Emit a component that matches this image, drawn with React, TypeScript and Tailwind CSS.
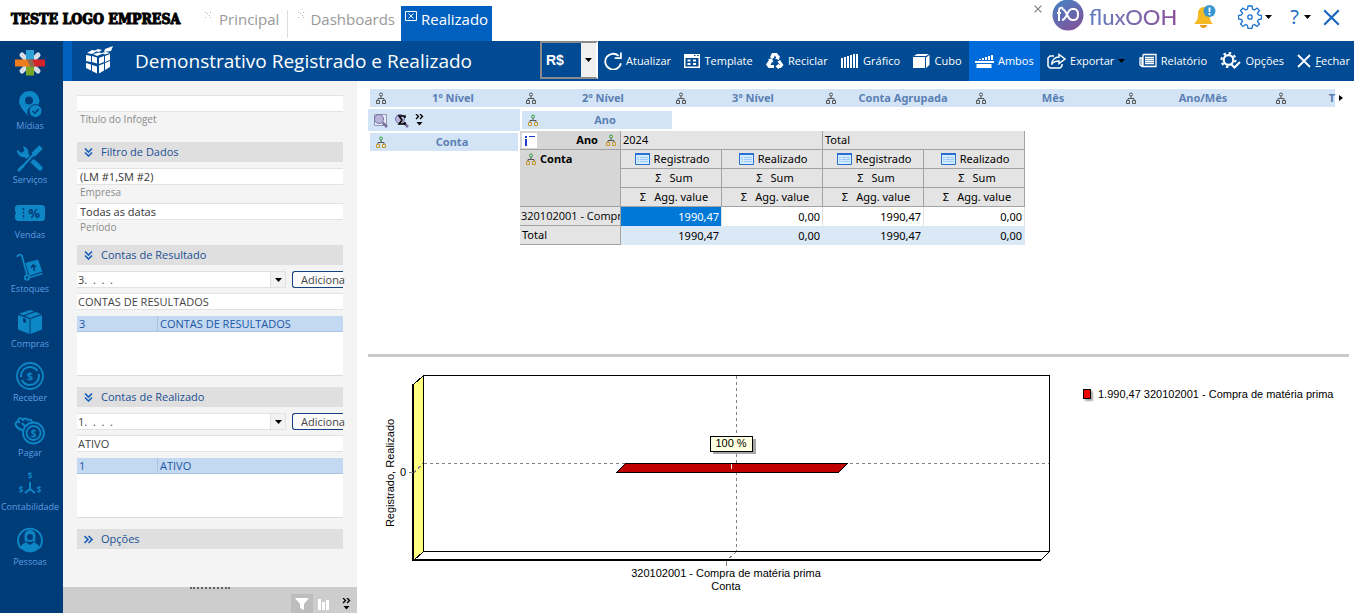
import React from "react";

type IconProps = { className?: string };

/* ---------- Sidebar icons ---------- */

const MidiasIcon = () => (
  <svg className="w-7 h-7" viewBox="0 0 28 28" fill="none">
    <path fill="currentColor" fillRule="evenodd" d="M13 1a10 10 0 0 0-10 10c0 5 4 9 9 15a6.800 6.800 0 0 1 3-9.500a6.800 6.800 0 0 1 7-.5A10 10 0 0 0 13 1Zm0 5.500a4 4 0 1 1 0 8a4 4 0 0 1 0-8Z" />
    <circle cx="19.500" cy="21" r="6.500" fill="currentColor" stroke="#003c78" />
    <path stroke="#003c78" strokeWidth="1.500" d="m16.500 21 2.300 2.200 4-4.200" />
  </svg>
);

const ServicosIcon = () => (
  <svg className="w-7 h-7" viewBox="0 0 28 28" fill="none" stroke="currentColor">
    <path strokeWidth="5" strokeLinecap="round" d="m10 11 14 13" />
    <path fill="currentColor" stroke="none" d="M1 5.500 5.500 9l3-2.500L7 2a7 7 0 0 1 5 9.500L9.500 13A7 7 0 0 1 1 5.500Z" />
    <path stroke="#003c78" strokeWidth="5" d="M7 22 20 9" />
    <path strokeWidth="2" d="M5 24 20 8" />
    <path strokeWidth="5" d="m17 11 8-8" />
    <path strokeWidth="3" strokeLinecap="round" d="m3 26 4-4" />
  </svg>
);

const VendasIcon = () => (
  <svg className="w-8 h-7" viewBox="0 0 32 28">
    <path fill="currentColor" d="M3 6h26l2 2v12l-2 2H3l-2-2v-4l1-2-1-2V8Z" />
    <path stroke="#003c78" strokeWidth="1.500" strokeDasharray="2 1.500" d="M9.500 9v11" />
    <text x="20" y="18.500" fontSize="13" fontWeight="700" fill="#003c78" textAnchor="middle">%</text>
  </svg>
);

const EstoquesIcon = () => (
  <svg className="w-7 h-7" viewBox="0 0 28 28" fill="none" stroke="currentColor" strokeWidth="1.800">
    <path d="M1 4c1-3 4-3 5-1l5 19" />
    <circle cx="11" cy="24.500" r="2.200" />
    <path d="m13.500 24.500 13-4" />
    <path fill="currentColor" d="m10.500 10.500 11-3 3.500 10.500-11 3.500Z" />
    <path stroke="#003c78" strokeWidth="1.500" d="m18.500 18-1.300-6m-2.200 3 2.200-3.200 2.800 2" />
  </svg>
);

const ComprasIcon = () => (
  <svg className="w-7 h-7" viewBox="0 0 28 28" fill="currentColor">
    <path d="m2 7 11.500 4v15L2 21.500ZM14.500 11 26 7v14.500L14.500 26ZM3 5.800 14 2l4 1.300L7.500 7.300ZM9 7.900l10.500-4 5.500 2-11 4Z" />
    <path fill="#003c78" d="m7 10 3 1v4l-3-1Z" />
  </svg>
);

const ReceberIcon = () => (
  <svg className="w-7 h-7" viewBox="0 0 28 28" fill="none" stroke="currentColor" strokeWidth="1.800">
    <circle cx="14" cy="14" r="13" />
    <circle cx="14" cy="14" r="9" strokeWidth="2" strokeDasharray="24 3" />
    <text x="14" y="18" fontSize="11" fontWeight="700" fill="currentColor" stroke="none" textAnchor="middle">$</text>
  </svg>
);

const PagarIcon = () => (
  <svg className="w-8 h-7" viewBox="0 0 32 28" fill="none" stroke="currentColor" strokeWidth="1.800">
    <path d="M9 14 3 10C0 7 2 4 5 5L4 3c1-3 4-2 5 0 1-2 4-2 5 0 2-1 4 0 4 2" />
    <path d="M3 9c0 3 3 4 5 3M8 6c2 4 5 3 6 1" />
    <circle cx="19.500" cy="16" r="10.500" />
    <circle cx="19.500" cy="16" r="7" />
    <text x="19.500" y="19.500" fontSize="10" fontWeight="700" fill="currentColor" stroke="none" textAnchor="middle">$</text>
  </svg>
);

const ContabilidadeIcon = () => (
  <svg className="w-7 h-7" viewBox="0 0 28 28" fill="currentColor">
    <path stroke="currentColor" strokeWidth="2" fill="none" d="M14 11v7l-5 4m5-4 5 4" />
    <text x="14" y="8" fontSize="8" fontWeight="700" textAnchor="middle">$</text>
    <text x="5" y="22" fontSize="8" fontWeight="700" textAnchor="middle">$</text>
    <text x="23" y="22" fontSize="8" fontWeight="700" textAnchor="middle">$</text>
  </svg>
);

const PessoasIcon = () => (
  <svg className="w-7 h-7" viewBox="0 0 28 28" fill="none" stroke="currentColor" strokeWidth="1.800">
    <path d="M5 22.500a12 12 0 1 1 18 0" />
    <path fill="currentColor" stroke="none" d="M4.500 22c1-4 3.500-5 6-5.500l3.500 2.500 3.500-2.500c2.500.5 5 1.500 6 5.500a12.500 12.500 0 0 1-19 0Z" />
    <path d="M10 16c-2-10 1.500-11 4-11s6 1 4 11" />
    <circle cx="14" cy="11" r="4" />
  </svg>
);

const sideItems = [
  { label: "Mídias", Icon: MidiasIcon },
  { label: "Serviços", Icon: ServicosIcon },
  { label: "Vendas", Icon: VendasIcon },
  { label: "Estoques", Icon: EstoquesIcon },
  { label: "Compras", Icon: ComprasIcon },
  { label: "Receber", Icon: ReceberIcon },
  { label: "Pagar", Icon: PagarIcon },
  { label: "Contabilidade", Icon: ContabilidadeIcon },
  { label: "Pessoas", Icon: PessoasIcon },
];

/* ---------- Toolbar icons ---------- */

const RefreshIcon = () => (
  <svg className="w-[18px] h-[18px]" viewBox="0 0 16 16" fill="none" stroke="currentColor" strokeWidth="1.600">
    <path d="M13 3.500A7 7 0 1 0 15 10M15 .5v5H9.500" />
  </svg>
);

const TemplateIcon = () => (
  <svg className="w-4 h-4" viewBox="0 0 16 16" fill="currentColor">
    <path fillRule="evenodd" d="M0 1h16v14H0Zm1.500 4v8.500h13V5ZM10 2v1h1.500V2Zm3 0v1h1.500V2Z" />
    <path d="M3.500 6.500h3v2h-3ZM9 6.500h3v2H9ZM3.500 10h3v2h-3ZM9 10h3v2H9Z" />
  </svg>
);

const RecycleIcon = () => (
  <svg className="w-[18px] h-4" viewBox="0 0 18 16" fill="currentColor">
    <path d="M6 0h5l2 3 1-.5-1 4.500-4-1.500 1.200-.8L9 2.500 7 6 4 4.300ZM2 6l4-.5L7.500 9.500l-1.300-.7L4.500 12H8v3H2.500L0 11.500 3 7ZM14 7l3.500 5-2.500 3h-2v1.500L9.500 13.500 13 10.500V12h1L11.500 8.500Z" />
  </svg>
);

const BarsIcon = () => (
  <svg className="w-[18px] h-4" viewBox="0 0 18 16" fill="currentColor">
    <path d="M0 5h2v10H0ZM3 4h2v11H3ZM6 3h2v12H6ZM9 2h2v13H9ZM12 1h2v14h-2ZM15 1h2v14h-2Z" />
  </svg>
);

const CuboIcon = () => (
  <svg className="w-[17px] h-4" viewBox="0 0 17 16" fill="currentColor">
    <path d="M0 4h12v11H0ZM1 3l3-2h12l-3 2ZM13 4.500 16.500 2v10L13 15Z" />
  </svg>
);

const AmbosIcon = () => (
  <svg className="w-[19px] h-4" viewBox="0 0 19 16" fill="currentColor">
    <path d="M0 8h19v2H0ZM1.500 11h15v4h-15ZM4 6h2v1H4ZM7 5h2v2H7ZM10 4h2v3h-2ZM13 3h2v4h-2ZM16 2h2v5h-2Z" />
  </svg>
);

const ExportIcon = () => (
  <svg className="w-[19px] h-4" viewBox="0 0 19 16" fill="none" stroke="currentColor" strokeWidth="1.500">
    <path d="M7 3H3L1 5v8l2 2h10l2-2v-2" />
    <path d="M12 1.500 18 6l-6 4.500V8C8 8 6 9 4.500 11.500 5 7 8 4 12 4Z" />
  </svg>
);

const ReportIcon = () => (
  <svg className="w-[18px] h-4" viewBox="0 0 18 16" fill="none" stroke="currentColor" strokeWidth="1.300">
    <path d="M4 1.500h13v12H3L1 12V5h2v8M4 1.500V13" />
    <path d="M6 4.500h9M6 6.500h9M6 8.500h9M6 10.500h9" />
  </svg>
);

const OptionsIcon = () => (
  <svg className="w-[21px] h-[18px]" viewBox="0 0 21 18" fill="none" stroke="currentColor">
    <circle cx="8.500" cy="8" r="4.800" strokeWidth="2.200" />
    <circle cx="8.500" cy="8" r="7" strokeWidth="2.200" strokeDasharray="2.500 3" />
    <path stroke="#004b93" strokeWidth="5" d="m12 13 2.500 2.500L20 9.500" />
    <path strokeWidth="2" d="m11.500 12.500 3 3L20 10" />
  </svg>
);

const CloseIcon = ({ className = "w-[14px] h-[14px]" }: IconProps) => (
  <svg className={className} viewBox="0 0 14 14" stroke="currentColor" strokeWidth="1.800">
    <path d="m1 1 12 12M13 1 1 13" />
  </svg>
);

const Caret = () => (
  <svg className="w-[7px] h-1" viewBox="0 0 7 4" fill="#000">
    <path d="M0 0h7L3.500 4Z" />
  </svg>
);

const toolbarItems = [
  { label: "Atualizar", Icon: RefreshIcon },
  { label: "Template", Icon: TemplateIcon },
  { label: "Reciclar", Icon: RecycleIcon },
  { label: "Gráfico", Icon: BarsIcon },
  { label: "Cubo", Icon: CuboIcon },
  { label: "Ambos", Icon: AmbosIcon, active: true },
  { label: "Exportar", Icon: ExportIcon, menu: true },
  { label: "Relatório", Icon: ReportIcon },
  { label: "Opções", Icon: OptionsIcon },
];

/* ---------- Small shared pieces ---------- */

const CubeLogo = () => (
  <svg className="w-[27px] h-[31px]" viewBox="0 0 27 31" fill="#fff">
    <path d="m1 7 5-3 5 1-5 3ZM8 5l4-2 4 1-3 2ZM19 3l8-3-2 5-7 1ZM7 8l6-1.500 4 1L11 10ZM15 7l5-1 4 1-5 1.500ZM0 9l5 1v6l-5-1ZM6 10l5 1.500v6L6 16ZM0 17l5 1.500v6L0 22ZM6 19l5 1.500v7L6 25ZM13 12l5-2v6l-5 2ZM19 10l5-2v6l-5 2ZM13 19.500l5-2v7l-5 3ZM19 17l5-2v6l-5 3Z" />
  </svg>
);

const StarLogo = () => (
  <svg className="w-[30px] h-[28px]" viewBox="0 0 30 28">
    <g stroke="#d5dde6" strokeWidth="5" strokeLinecap="round">
      <path d="m7 6 16 16M23 6 7 22" />
    </g>
    <path fill="#2f9fd8" d="M11 1h8v12h-8Z" />
    <path fill="#79a528" d="M11 14h8v12.500h-8Z" />
    <path fill="#ee7d1d" d="M0 10.500h15v7H0Z" />
    <path fill="#d4232b" d="M15 10.500h15v7H15Z" />
    <path fill="#8a6a50" d="M12 10.500h5l3 7h-5Z" />
  </svg>
);

const Tree = ({ colored }: { colored?: boolean }) => (
  <svg className="w-[10px] h-3 shrink-0" viewBox="0 0 10 12" fill="none" stroke="#555">
    <path d="M5 4v3M2 8V6.500h6V8" />
    <circle cx="5" cy="2.500" r="1.500" stroke={colored ? "#2f9a3c" : "#555"} />
    <path d="M.5 8.500h3v3h-3ZM6.500 8.500h3v3h-3Z" stroke={colored ? "#c79a2b" : "#555"} />
  </svg>
);

const GridIcon = () => (
  <svg className="w-[15px] h-3 shrink-0" viewBox="0 0 15 12">
    <path fill="#d4ecff" stroke="#2b6fd0" d="M.5.5h14v11H.5Z" />
    <path fill="#2b6fd0" d="M0 0h15v2H0Z" />
    <path stroke="#9ccaf2" d="M2 4.500h2M5 4.500h8M2 6.500h2M5 6.500h8M2 8.500h2M5 8.500h8" />
  </svg>
);

const DoubleArrow = ({ right }: { right?: boolean }) => (
  <svg className="w-[9px] h-[9px]" viewBox="0 0 9 9" fill="none" stroke="#1560bd" strokeWidth="1.600">
    <path d={right ? "M.5 1 4 4.500.5 8M4.500 1 8 4.500 4.500 8" : "M1 .5 4.500 4 8 .5M1 4.500 4.500 8 8 4.500"} />
  </svg>
);

const MoreIcon = () => (
  <svg className="w-[9px] h-3" viewBox="0 0 9 12" fill="none" stroke="#000" strokeWidth="1.400">
    <path d="m1 0 2.500 2.500L1 5M5 0l2.500 2.500L5 5" />
    <path fill="#000" stroke="none" d="M1.500 8h6l-3 3.500Z" />
  </svg>
);

const Magnifier = ({ sigma }: { sigma?: boolean }) => (
  <svg className="w-[15px] h-[15px]" viewBox="0 0 15 15" fill="none">
    {!sigma && <path fill="#e8ecf8" stroke="#8c97b8" d="M1.500 1.500h12v11h-12Z" />}
    <circle cx="6" cy="6" r="4.500" fill="#b9b4da" stroke="#7771a5" />
    <path stroke="#7a70a0" strokeWidth="2.500" d="m9.500 9.500 4.500 4.500" />
    {sigma && <path stroke="#000" strokeWidth="1.500" d="M11 5V3H5l3 4-3 4h6V9" />}
  </svg>
);

function SectionHeader({ children, closed }: { children: React.ReactNode; closed?: boolean }) {
  return (
    <button className="flex w-full h-5 items-center gap-2 bg-[#dfdfdf] pl-[7px] text-[11px] font-medium text-[#1b4f94]">
      <DoubleArrow right={closed} />
      {children}
    </button>
  );
}

function Field({ id, label, value }: { id: string; label: string; value: string }) {
  return (
    <div>
      <input
        id={id}
        defaultValue={value}
        className="block w-full h-[17px] border-y border-[#e2e2e2] bg-white px-[3px] text-[11px] leading-4 text-[#333]"
      />
      <label htmlFor={id} className="block pl-[3px] text-[10px] leading-[14px] text-[#8a8a8a]">
        {label}
      </label>
    </div>
  );
}

function AccountPicker({ code, name, row }: { code: string; name: string; row: string }) {
  return (
    <div className="mt-1.5 text-[11px] text-[#444]">
      <div className="flex h-[17px] items-center gap-1.5">
        <div className="relative flex-1">
          <select aria-label={name} className="block w-full h-[17px] appearance-none border-y border-[#e2e2e2] bg-white pl-px text-[11px] leading-[15px]">
            <option>{`${code}.\u00a0 .\u00a0 .\u00a0 .`}</option>
          </select>
          <span className="pointer-events-none absolute right-0 inset-y-0 flex w-4 items-center justify-center border border-[#e2e2e2] bg-[#f2f2f2]">
            <Caret />
          </span>
        </div>
        <button className="h-[17px] w-[51px] rounded-l-[3px] border border-r-0 border-[#16407f] bg-[#fbfbfb] pl-2 text-left text-[11px] leading-[15px]">
          Adiciona
        </button>
      </div>
      <input
        aria-label="Descrição da conta"
        defaultValue={name}
        className="mt-[5px] block w-full h-[17px] border-y border-[#e2e2e2] bg-white px-px text-[11px] leading-[15px]"
      />
      <div className="mt-1.5 h-[60px] border-b border-[#dcdcdc] bg-white">
        <table className="w-full table-fixed border-separate border-spacing-0 text-[#1b57a5]">
          <tbody>
            <tr className="h-4 bg-[#c3d9f1] leading-[15px]">
              <td className="w-[81px] border-r border-b border-[#a9c4e2] pl-0.5">{row}</td>
              <td className="border-b border-[#a9c4e2] pl-0.5">{name}</td>
            </tr>
          </tbody>
        </table>
      </div>
    </div>
  );
}

function Dimension({ label, colored }: { label: string; colored?: boolean }) {
  return (
    <button className="flex w-full h-[18px] items-center bg-[#d2e4f6] pl-1.5 text-[11px] font-bold text-[#5b80b2]">
      <Tree colored={colored} />
      <span className="flex-1 text-center">{label}</span>
    </button>
  );
}

/* ---------- Pivot grid ---------- */

const head = "h-[19px] border-r border-b border-[#a3a3a3] bg-[#e4e4e4] p-0 font-normal";
const measures = ["Registrado", "Realizado", "Registrado", "Realizado"];

function PivotTable() {
  return (
    <table className="w-[505px] table-fixed border-separate border-spacing-0 text-[11px] leading-[18px] text-black">
      <thead>
        <tr>
          <th className="h-[19px] w-[101px] border-r border-b border-[#a3a3a3] bg-[#d6d6d6] p-0 font-bold">
            <div className="flex items-center gap-2 pr-1 pl-0.5">
              <svg className="w-[15px] h-[15px]" viewBox="0 0 15 15">
                <path fill="#fff" d="M0 0h15v15H0Z" />
                <path stroke="#2438d0" strokeWidth="2" d="M3 4h2M4 6v7" />
                <path stroke="#2438d0" d="M7 3.500h6" />
              </svg>
              <span className="flex-1 text-right">Ano</span>
              <Tree colored />
            </div>
          </th>
          <th colSpan={2} className={`${head} text-left`}>
            <span className="pl-0.5">2024</span>
          </th>
          <th colSpan={2} className={`${head} text-left`}>
            <span className="pl-0.5">Total</span>
          </th>
        </tr>
        <tr>
          <th rowSpan={3} className="border-r border-b border-[#a3a3a3] bg-[#d6d6d6] p-0 align-top font-bold">
            <div className="flex items-center gap-1 pl-1.5">
              <Tree colored />
              Conta
            </div>
          </th>
          {measures.map((measure, i) => (
            <th key={i} className={head}>
              <div className="flex items-center justify-center gap-1 pl-0.5">
                <GridIcon />
                {measure}
              </div>
            </th>
          ))}
        </tr>
        <tr>
          {measures.map((_, i) => (
            <th key={i} className={head}>
              <div className="flex justify-center gap-2 pl-1.5">
                <span>Σ</span>Sum
              </div>
            </th>
          ))}
        </tr>
        <tr>
          {measures.map((_, i) => (
            <th key={i} className={head}>
              <div className="flex justify-center gap-2 pl-1.5">
                <span>Σ</span>Agg. value
              </div>
            </th>
          ))}
        </tr>
      </thead>
      <tbody className="text-right">
        <tr>
          <th className={`${head} overflow-hidden font-['Open_Sans',sans-serif] text-left whitespace-nowrap`}>
            <span className="pl-px">320102001 - Compr</span>
          </th>
          <td className="border-r border-[#e0e0e0] bg-[#0078d7] p-0 pr-0.5 text-white">1990,47</td>
          <td className="border-r border-[#e0e0e0] bg-white p-0 pr-0.5">0,00</td>
          <td className="border-r border-[#e0e0e0] bg-white p-0 pr-0.5">1990,47</td>
          <td className="border-r border-[#e0e0e0] bg-white p-0 pr-0.5">0,00</td>
        </tr>
        <tr className="bg-[#dbe8f6]">
          <th className={`${head} text-left`}>
            <span className="pl-0.5">Total</span>
          </th>
          <td className="p-0 pr-[3px]">1990,47</td>
          <td className="p-0 pr-[3px]">0,00</td>
          <td className="p-0 pr-[3px]">1990,47</td>
          <td className="p-0 pr-[3px]">0,00</td>
        </tr>
      </tbody>
    </table>
  );
}

/* ---------- Chart ---------- */

function Chart() {
  return (
    <svg className="w-[700px] h-[240px] shrink-0" viewBox="0 0 700 240" fontFamily="'Liberation Sans', sans-serif" fontSize="11" shapeRendering="crispEdges">
      <path fill="#ffff80" stroke="#000" d="M45.500 27.500 55.500 18.500v176l-10 9Z" />
      <path fill="none" stroke="#000" d="M55.500 18.500h626v176h-626Z" />
      <path fill="none" stroke="#000" d="m681.500 194.500-9 9" />
      <path fill="none" stroke="#000" strokeWidth="2" d="M45 27v176h628" />
      <g stroke="#808080" fill="none">
        <path strokeDasharray="3 3" d="M56 106.500h625M368.500 19v175" />
        <path strokeDasharray="3 3" d="m46 115.500 9-9M368 195l-9 8" />
        <path d="M41 115.500h4M358.500 204v5" />
      </g>
      <path fill="#c00000" stroke="#000" d="M257.500 106.500h222l-9 9h-222Z" />
      <path stroke="#fff" d="M363.500 107v5" />
      <path fill="#000" opacity=".35" d="M345 82h43v15h-43Z" />
      <path fill="#ffffe1" stroke="#000" d="M342.500 79.500h42v15h-42Z" />
      <text x="363" y="90" textAnchor="middle">100 %</text>
      <text x="35" y="119" textAnchor="middle">0</text>
      <text x="358" y="220" textAnchor="middle">320102001 - Compra de matéria prima</text>
      <text x="358" y="233" textAnchor="middle">Conta</text>
      <text transform="translate(26 116) rotate(-90)" textAnchor="middle">Registrado, Realizado</text>
    </svg>
  );
}

const Grip = () => (
  <svg className="w-[6px] h-[6px] mt-0.5" viewBox="0 0 6 6" fill="#bbb">
    <path d="M0 0h1v1H0ZM5 0h1v1H5ZM0 5h1v1H0ZM5 5h1v1H5ZM2 1h1v1H2ZM4 3h1v1H4Z" />
  </svg>
);

function TopBar() {
  return (
    <header className="flex h-[41px] justify-between bg-white">
      <div className="flex">
        <div className="w-[195px] pt-2.5 pl-[11px] font-['DejaVu_Serif_Condensed','DejaVu_Serif',serif] text-[14px] leading-[18px] font-black whitespace-nowrap text-black [-webkit-text-stroke:1px_#000]">
          TESTE LOGO EMPRESA
        </div>
        <nav className="flex text-[15px] leading-[18px] text-[#999]">
          <a href="#principal" className="mt-2.5 flex h-7 gap-2 border-r border-[#ddd] pr-2 pl-2.5">
            <Grip />
            Principal
          </a>
          <a href="#dashboards" className="mt-2.5 flex h-7 gap-1.5 pr-1.5 pl-2.5">
            <Grip />
            Dashboards
          </a>
          <a href="#realizado" className="mt-1.5 flex gap-1 bg-[#0060c0] px-1 pt-1 text-white">
            <svg className="w-3 h-3 mt-px" viewBox="0 0 12 12" fill="none" stroke="#fff">
              <path d="M.5.5h11v9H.5ZM3.500 2.500l5 5M8.500 2.500l-5 5" />
            </svg>
            Realizado
          </a>
        </nav>
      </div>
      <div className="flex h-[34px] items-center pr-[14px]">
        <button aria-label="Fechar aviso" className="mb-4 mr-2.5 text-[#777]">
          <CloseIcon className="w-2 h-2" />
        </button>
        <svg className="w-8 h-8 mb-1" viewBox="0 0 32 32" fill="none">
          <defs>
            <linearGradient id="flux" x1="0" y1="0" x2=".6" y2="1">
              <stop offset="0" stopColor="#4386c6" />
              <stop offset="1" stopColor="#7c559d" />
            </linearGradient>
          </defs>
          <circle cx="16" cy="16" r="15.500" fill="url(#flux)" />
          <path stroke="#fff" strokeWidth="2" d="M7 22V12c0-3 1.500-3.500 4-3M5 14h4M10 10c5 0 5 11 10 11h2c3 0 4-2 4-5.500s-1-5.500-4-5.500h-2c-5 0-5 11-10 11" />
        </svg>
        <span className="ml-[5px] bg-gradient-to-r from-[#5f7fc0] to-[#8a4f9a] bg-clip-text font-['Lato',sans-serif] text-[22px] leading-8 font-medium whitespace-nowrap text-transparent">
          fluxOOH
        </span>
        <button aria-label="Notificações" className="ml-[17px]">
          <svg className="w-[22px] h-6" viewBox="0 0 22 24">
            <path fill="#f5b921" d="M10 2C5 2 4 6 4 9c0 5-1 7-4 10h19c-3-3-3-5-3-9 0-5-2-8-6-8Z" />
            <path fill="#e89a16" d="M6 20h7c0 4-7 4-7 0Z" />
            <circle cx="15.500" cy="6" r="6" fill="#3a96d0" />
            <path stroke="#fff" strokeWidth="1.800" d="M15.500 2.500v4.500M15.500 8v2" />
          </svg>
        </button>
        <button aria-label="Configurações" className="ml-[22px] flex items-center gap-[3px]">
          <svg className="w-6 h-6" viewBox="0 0 24 24" fill="none" stroke="#1a72d0" strokeWidth="1.300">
            <path d="m10 1 4 0 .5 3 2 1 2.500-2 2.500 2.500-2 2.500 1 2 3 .5v3.500l-3 .5-1 2 2 2.500-2.500 2.500-2.500-2-2 1-.5 3h-4l-.5-3-2-1-2.500 2L2.500 19l2-2.500-1-2-3-.5v-3.500l3-.5 1-2-2-2.500L5 3l2.500 2 2-1Z" />
            <circle cx="12" cy="12" r="2.200" />
          </svg>
          <Caret />
        </button>
        <button className="ml-[18px] flex items-center gap-[5px] text-[20px] leading-6 text-[#1a66c0]">
          ?<Caret />
        </button>
        <button aria-label="Sair" className="ml-3 text-[#1a66c0]">
          <CloseIcon className="w-[17px] h-[17px]" />
        </button>
      </div>
    </header>
  );
}

function Toolbar() {
  return (
    <div className="flex h-10 flex-1 border-l-[9px] border-[#0060c0] bg-[#004b93] text-white">
      <div className="flex w-[468px] items-center gap-[22px] pl-[14px]">
        <CubeLogo />
        <h1 className="text-[19px] whitespace-nowrap">Demonstrativo Registrado e Realizado</h1>
      </div>
      <div className="relative h-[38px] w-[58px] border-2 border-[#8b8b8b] border-r-white">
        <select aria-label="Moeda" className="h-full w-full appearance-none bg-[#004b93] pl-1 font-['Liberation_Sans',sans-serif] text-[14px] font-bold text-white">
          <option>R$</option>
        </select>
        <span className="pointer-events-none absolute right-0 inset-y-0 flex w-[15px] items-center justify-center bg-[#f0f0f0]">
          <Caret />
        </span>
      </div>
      <div className="flex flex-1 justify-between text-[11px]">
        {toolbarItems.map(({ label, Icon, active, menu }) => (
          <button key={label} className={`flex items-center gap-1 px-1.5 ${active ? "bg-[#006cdc]" : ""}`}>
            <Icon />
            {label}
            {menu && <Caret />}
          </button>
        ))}
        <button className="flex items-center gap-1 pr-1 pl-1.5">
          <CloseIcon />
          <span>
            <span className="underline">F</span>echar
          </span>
        </button>
      </div>
    </div>
  );
}

function FilterPanel() {
  return (
    <aside className="flex w-[294px] shrink-0 flex-col bg-[#f4f4f4]">
      <div className="flex-1 px-[14px] pt-[14px]">
        <Field id="titulo" label="Título do Infoget" value="" />
        <div className="mt-4">
          <SectionHeader>Filtro de Dados</SectionHeader>
        </div>
        <div className="mt-1.5 flex flex-col gap-1">
          <Field id="empresa" label="Empresa" value="(LM #1,SM #2)" />
          <Field id="periodo" label="Período" value="Todas as datas" />
        </div>
        <div className="mt-[11px]">
          <SectionHeader>Contas de Resultado</SectionHeader>
        </div>
        <AccountPicker code="3" name="CONTAS DE RESULTADOS" row="3" />
        <div className="mt-[11px]">
          <SectionHeader>Contas de Realizado</SectionHeader>
        </div>
        <AccountPicker code="1" name="ATIVO" row="1" />
        <div className="mt-[11px]">
          <SectionHeader closed>Opções</SectionHeader>
        </div>
      </div>
      <div className="h-[26px] bg-[#cdcdcd]">
        <div className="mx-auto h-[3px] w-10 border-t-2 border-dotted border-[#666]" />
        <div className="flex h-[23px] items-center justify-end pt-1 pr-1.5">
          <button aria-label="Filtrar" className="flex w-[22px] h-[19px] items-center justify-center bg-[#bdbdbd]">
            <svg className="w-[14px] h-3" viewBox="0 0 14 12" fill="#fff">
              <path d="M0 0h14L9 6v6l-4-2V6Z" />
            </svg>
          </button>
          <button aria-label="Gráfico" className="ml-[5px]">
            <svg className="w-3 h-3" viewBox="0 0 12 12" fill="#fff">
              <path d="M0 1h3v11H0ZM4 4h3v8H4ZM8 2h3v10H8Z" />
            </svg>
          </button>
          <button aria-label="Mais" className="ml-3">
            <MoreIcon />
          </button>
        </div>
      </div>
    </aside>
  );
}

export default function App() {
  return (
    <div className="flex min-h-screen flex-col bg-white font-['Open_Sans',sans-serif]">
      <TopBar />
      <div className="flex flex-1">
        {/* Module sidebar */}
        <nav className="w-[63px] shrink-0 bg-[#003c78] pr-[3px]">
          <a href="#inicio" aria-label="Início" className="flex h-[43px] items-center justify-center">
            <StarLogo />
          </a>
          <div className="flex h-[490px] flex-col">
            {sideItems.map(({ label, Icon }) => (
              <a key={label} href={`#${label}`} className="flex flex-1 flex-col items-center pt-1.5 text-[#0d87c5]">
                <Icon />
                <span className="pt-px text-[9px] leading-[14px] text-[#5c9ce0]">{label}</span>
              </a>
            ))}
          </div>
        </nav>

        <div className="flex min-w-0 flex-1 flex-col">
          <div className="flex">
            <Toolbar />
          </div>
          <div className="flex flex-1">
            <FilterPanel />

            <main className="min-w-0 flex-1 pl-[11px] font-['Noto_Sans',sans-serif]">
              <div className="min-h-[273px] pt-2">
                {/* Available dimensions */}
                <div className="flex items-center gap-1 pr-[11px] pl-0.5">
                  <div className="grid min-w-0 flex-1 grid-cols-[repeat(6,150px)_1fr]">
                    {["1º Nível", "2º Nível", "3º Nível", "Conta Agrupada", "Mês", "Ano/Mês"].map((label) => (
                      <Dimension key={label} label={label} />
                    ))}
                    <button className="flex h-[18px] items-center justify-between bg-[#d2e4f6] pl-1.5 text-[11px] font-bold text-[#5b80b2]">
                      <Tree />T
                    </button>
                  </div>
                  <svg className="w-1 h-[6px]" viewBox="0 0 4 6">
                    <path d="M0 0v6l4-3Z" />
                  </svg>
                </div>

                <div className="mt-0.5 flex items-start">
                  <div className="w-[152px]">
                    <div className="flex h-[22px] items-center gap-1.5 bg-[#d2e4f6] pl-[5px]">
                      <button aria-label="Pesquisar">
                        <Magnifier />
                      </button>
                      <button aria-label="Totalizar">
                        <Magnifier sigma />
                      </button>
                      <button aria-label="Mais opções">
                        <MoreIcon />
                      </button>
                    </div>
                    <div className="mt-0.5 px-0.5">
                      <Dimension label="Conta" colored />
                    </div>
                  </div>
                  <div>
                    <div className="my-0.5 ml-0.5 w-[150px]">
                      <Dimension label="Ano" colored />
                    </div>
                    <PivotTable />
                  </div>
                </div>
              </div>

              {/* Chart pane */}
              <div className="mr-[5px] h-[3px] bg-[#cacaca]" />
              <div className="flex">
                <Chart />
                <div className="mt-[30px] ml-[15px] flex h-[14px] items-center gap-[7px] font-['Liberation_Sans',sans-serif] text-[11px] text-black">
                  <span className="h-2.5 w-2 border border-black bg-[#f00000] shadow-[2px_2px_2px_#aaa]" />
                  1.990,47 320102001 - Compra de matéria prima
                </div>
              </div>
            </main>
          </div>
        </div>
      </div>
    </div>
  );
}
